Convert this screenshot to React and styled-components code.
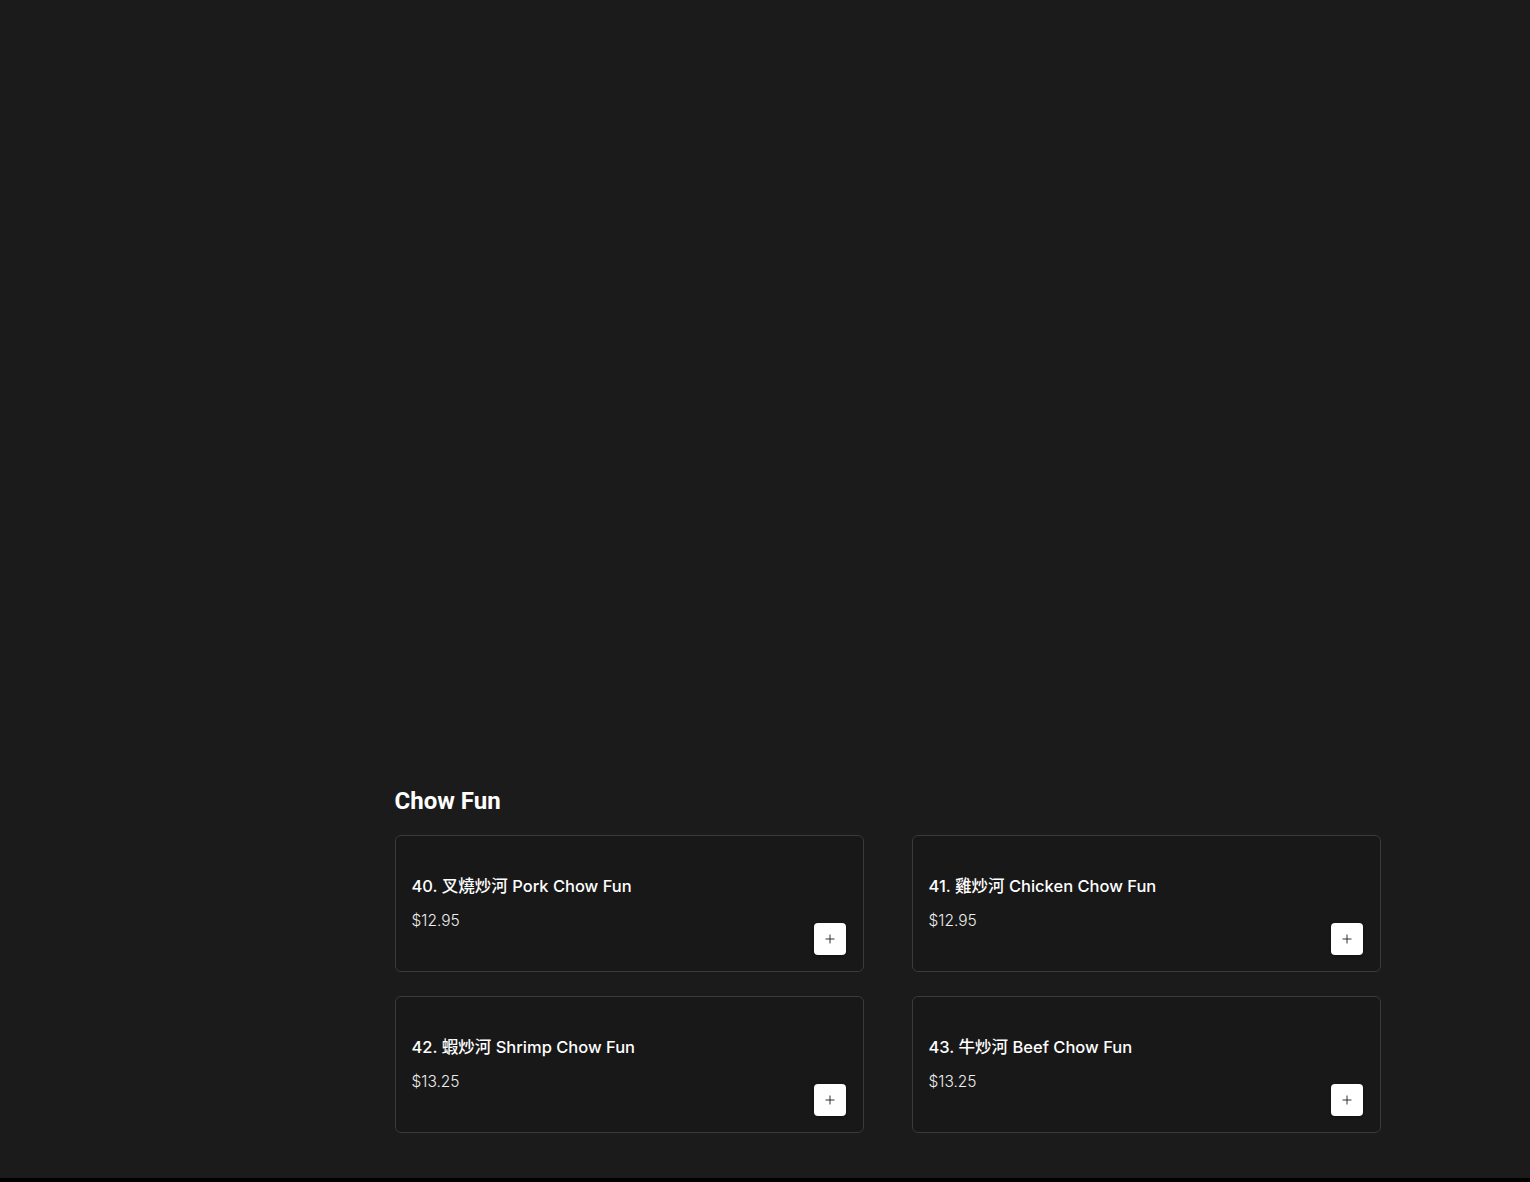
import React from "react";
import styled, { createGlobalStyle } from "styled-components";
import { Plus } from "lucide-react";

const MENU = [
  { id: 40, zh: "叉燒炒河", name: "Pork Chow Fun", price: "$12.95" },
  { id: 41, zh: "雞炒河", name: "Chicken Chow Fun", price: "$12.95" },
  { id: 42, zh: "蝦炒河", name: "Shrimp Chow Fun", price: "$13.25" },
  { id: 43, zh: "牛炒河", name: "Beef Chow Fun", price: "$13.25" },
];

const GlobalStyle = createGlobalStyle`
  body {
    margin: 0;
    background: #1b1b1b;
    color: #fff;
    font-family: Inter, "Noto Sans CJK TC", sans-serif;
  }
`;

function App() {
  return (
    <>
      <GlobalStyle />
      <Page>
        <Hero />
        <Container>
          <Sidebar />
          <Section>
            <Title>Chow Fun</Title>
            <Grid>
              {MENU.map((item) => (
                <Card key={item.id}>
                  <Info>
                    <ItemName>
                      {item.id}. {item.zh} {item.name}
                    </ItemName>
                    <Price>{item.price}</Price>
                  </Info>
                  <AddBtn aria-label="add">
                    <Plus size={14} strokeWidth={1.6} />
                  </AddBtn>
                </Card>
              ))}
            </Grid>
          </Section>
        </Container>
      </Page>
      <Footer />
    </>
  );
}
export default App;

const Page = styled.main`
  padding-bottom: 45px;
`;

const Hero = styled.div`
  height: 787px;
`;

const Container = styled.div`
  width: 1231px;
  margin: 0 auto;
  display: flex;
  gap: 48px;
`;

const Sidebar = styled.aside`
  width: 197px;
  flex-shrink: 0;
`;

const Section = styled.section`
  flex: 1;
`;

const Title = styled.h2`
  margin: 0 0 19px;
  font-family: Roboto, sans-serif;
  font-size: 24px;
  line-height: 29px;
  font-weight: 700;
  color: #fff;
`;

const Grid = styled.div`
  display: grid;
  grid-template-columns: 1fr 1fr;
  column-gap: 48px;
  row-gap: 24px;
`;

const Card = styled.div`
  height: 137px;
  box-sizing: border-box;
  padding: 16px;
  display: flex;
  justify-content: space-between;
  background: #181818;
  border: 1px solid #3b3b3b;
  border-radius: 6px;
`;

const Info = styled.div`
  padding-top: 22px;
`;

const ItemName = styled.div`
  font-size: 16.5px;
  line-height: 24px;
  font-weight: 500;
`;

const Price = styled.div`
  margin-top: 11px;
  font-size: 15.5px;
  line-height: 24px;
  font-weight: 300;
  color: #eee;
`;

const AddBtn = styled.button`
  align-self: flex-end;
  width: 32px;
  height: 32px;
  padding: 0;
  margin-right: 1px;
  display: flex;
  align-items: center;
  justify-content: center;
  background: #fff;
  color: #222;
  border: none;
  border-radius: 4px;
  box-shadow: 0 1px 3px rgba(0, 0, 0, 0.4);
`;

const Footer = styled.footer`
  height: 40px;
  background: #000;
`;
